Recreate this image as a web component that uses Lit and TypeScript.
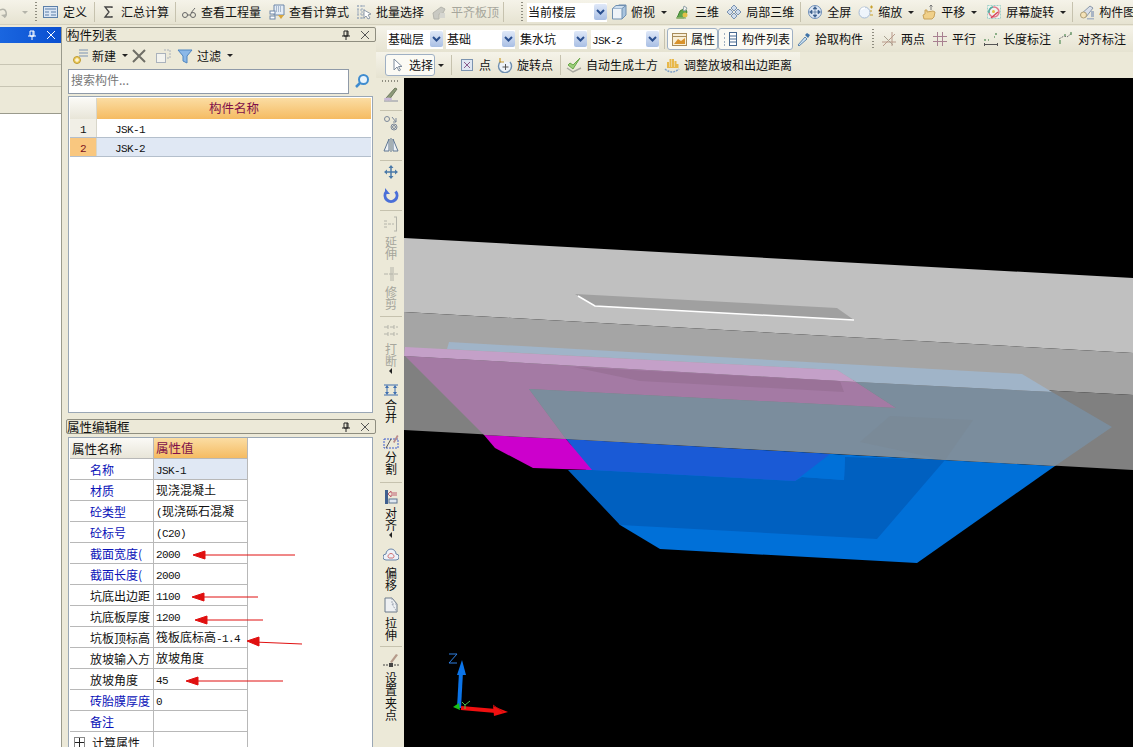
import { LitElement, html, svg, css, nothing } from 'lit';
import { customElement } from 'lit/decorators.js';

// toolbar glyphs, all on a 16x16 box
const ICONS: Record<string, unknown> = {
  redo: svg`<path d="M0 6q5-2 6 2t-2 5" fill="none" stroke="#b4b4aa" stroke-width="1.500"/><path d="M1 11l4 3 2-4z" fill="#b4b4aa"/>`,
  define: svg`<rect x="0.500" y="2.500" width="14" height="11" fill="#dbe6f4" stroke="#5b7fa8"/><path d="M2 5h11M2 8h4M2 11h4M8 8h5M8 11h5" stroke="#5b7fa8"/>`,
  sigma: svg`<path d="M11 4V3H4l4 5-4 5h7v-1" fill="none" stroke="#444" stroke-width="1.3"/>`,
  glasses: svg`<circle cx="4" cy="11" r="2.500" fill="none" stroke="#666"/><circle cx="12" cy="11" r="2.500" fill="none" stroke="#666"/><path d="M6.500 11h3M10 9q3-4 4-5" fill="none" stroke="#666"/>`,
  calc: svg`<path d="M5 1h10v10H5z" fill="#e4ecf6" stroke="#6d86a8"/><path d="M7 3h6M7 5h6M7 7h6" stroke="#6d86a8" stroke-dasharray="1 1"/><rect x="1" y="7" width="5" height="3" fill="#fff" stroke="#6d86a8"/><rect x="1" y="12" width="5" height="3" fill="#fff" stroke="#6d86a8"/><path d="M9 11h6l-3 4z" fill="#d8a63c"/>`,
  batch: svg`<path d="M1 2h9M1 6h9M1 10h9M1 14h9M2 1v14M6 1v14" stroke="#9aa9bb" stroke-dasharray="2 1"/><path d="M8 6l7 4-3 1 2 3-2 1-2-3-2 2z" fill="#fff" stroke="#8d99a8"/>`,
  level: svg`<path d="M2 9l8-6 4 2-2 4-4 1v5H3z" fill="#c9c9c2" stroke="#b4b4ac"/><path d="M9 9h5v5H9z" fill="#d6d6d0"/>`,
  box: svg`<path d="M5 3l3-2h7v10l-4 4z" fill="#a9c4de" stroke="#6f8fb0"/><path d="M1.500 4.500h9.500v10.500H1.500z" fill="#eef3f8" stroke="#6f8fb0"/><path d="M1.500 4.500L5 1.500h10L11 4.500" fill="#cfe0f0" stroke="#6f8fb0"/>`,
  three: svg`<path d="M2 14l3-7 5-3 2 4-3 6z" fill="#5fa64a" stroke="#3f8032"/><path d="M9 2l3 2-2 3-2-1z" fill="#f4f4f0" stroke="#8fa0a8"/><circle cx="10" cy="11" r="2.500" fill="#e3c048"/><path d="M1 14h10" stroke="#9ab878" stroke-width="1.500"/>`,
  local: svg`<path d="M8 1l3 3-3 3-3-3zM4 5l3 3-3 3-3-3zM12 5l3 3-3 3-3-3zM8 9l3 3-3 3-3-3z" fill="#cfdcec" stroke="#7b93b0"/>`,
  full: svg`<circle cx="8" cy="8" r="6.500" fill="#dfe9f6" stroke="#6f8fb8"/><path d="M8 3.500v9M3.500 8h9M8 2.500l-2 2.500h4zM8 13.500l-2-2.500h4zM2.500 8l2.500-2v4zM13.500 8l-2.500-2v4z" fill="#3b5f8f" stroke="#3b5f8f" stroke-width=".6"/>`,
  zoom: svg`<circle cx="6.500" cy="8.500" r="5.500" fill="#eef4fb" stroke="#a8bcd4"/><path d="M3 6a4 4 0 0 1 4-2" fill="none" stroke="#fff" stroke-width="1.500"/><path d="M12 3h3M13.500 1.500v3M12 11h3M12 7h2" stroke="#c8a02c" stroke-width="1.200"/>`,
  pan: svg`<path d="M3 15l-1-4 2-1V6h2v2l6-1 2 1-1 5-2 2z" fill="#f0d089" stroke="#c8a25a"/><path d="M10 6V1M8.500 2.500L10 1l1.500 1.500" fill="none" stroke="#777"/>`,
  rotate: svg`<rect x="1.500" y="1.500" width="13" height="13" fill="#eef4ee" stroke="#9fd0c8" stroke-dasharray="2 1"/><circle cx="8" cy="8" r="5" fill="none" stroke="#e2788a" stroke-width="1.500"/><path d="M3 9a5 5 0 0 1 4-6" fill="none" stroke="#48b6a8" stroke-width="1.500"/><circle cx="7.500" cy="7.500" r="1.500" fill="#e3c048"/><path d="M5 14l7-6" stroke="#d84058" stroke-width="1.500"/>`,
  drawing: svg`<path d="M1 11l10-9 3 2-7 9z" fill="#d8dee8" stroke="#8a98aa"/><circle cx="4.500" cy="11" r="3" fill="#f4e2b8" stroke="#b0a078"/><path d="M8 14h7v1.500H8zM12 7h3v6h-3z" fill="#a8b4c4"/>`,
  attr: svg`<rect x="1.500" y="2.500" width="14" height="12" fill="#f8eed6" stroke="#a88c5a"/><path d="M1.500 5.500h14" stroke="#a88c5a"/><path d="M3 13l4-5 3 2 4-3v6z" fill="#d8922c"/>`,
  list: svg`<path d="M2 3h2M2 7h2M2 11h2M2 14h2" stroke="#46688f" stroke-dasharray="1 1"/><rect x="7.500" y="1.500" width="7" height="13" fill="#fff" stroke="#46688f"/><path d="M7.500 5h7M7.500 8h7M7.500 11h7" stroke="#46688f"/>`,
  picker: svg`<path d="M3 14l7-8 2 2-8 7z" fill="#cfe3f4" stroke="#5e86ad"/><path d="M10 4l2-2 3 2-2 3z" fill="#3f73a8"/>`,
  twopt: svg`<path d="M1 11h14M2 15L14 3M11 1v14" stroke="#b89a8a" fill="none"/><path d="M3 5l9 9" stroke="#a8a090"/>`,
  parallel: svg`<path d="M1 5.500h14M1 10.500h14M5.500 1v14M10.500 1v14" stroke="#a88090" fill="none"/>`,
  dimlen: svg`<path d="M1.500 12v3M14.500 12v3M1.500 13.500h13" stroke="#555" fill="none"/><path d="M2 8v2M13 2v2M5 9h1M11 6h1" stroke="#6a9a6a" stroke-width="1.500"/>`,
  dimal: svg`<path d="M1 8l5-3 3 1 5-4" stroke="#777" stroke-dasharray="2 1" fill="none"/><path d="M2 9v4M7 3v2M13 1v3" stroke="#6a9a6a" stroke-width="1.400"/>`,
  cursor: svg`<path d="M5 2v11l3-3 2 4 1.500-1-2-3.500h3.500z" fill="#fff" stroke="#7d8b9c"/>`,
  point: svg`<rect x="2.500" y="2.500" width="11" height="11" fill="#dfe7f2" stroke="#7b93b0"/><path d="M5 5l6 6M11 5l-6 6" stroke="#8a5a8a"/>`,
  rotpt: svg`<path d="M13 5a6.500 6.500 0 1 1-9.500-.500" fill="#eef3f8" stroke="#6f8fb0" stroke-width="1.400"/><path d="M3 1v4h4" fill="none" stroke="#c89a2c" stroke-width="1.200"/><path d="M8.500 7v6M5.500 10h6" stroke="#555"/>`,
  autogen: svg`<path d="M2 8l5 4 7-11-7 7-3-2z" fill="#9ccf7a" stroke="#6aa84a"/><path d="M1 11l6 4 8-4" fill="none" stroke="#a8a8a0" stroke-width="1.500"/>`,
  hand: svg`<path d="M4 10V5M6.500 10V2M9 10V2M11.500 10V4M13.500 11V7" stroke="#e8b84a" stroke-width="2"/><path d="M3 10h11v1H3z" fill="#e8b84a"/><path d="M1 12q7 6 14 0" fill="none" stroke="#7ea0c8" stroke-width="1.500" stroke-dasharray="2 1"/>`,
  add: svg`<path d="M7 2h9M7 5h9M7 8h9" stroke="#7a93b3"/><circle cx="5" cy="12" r="3.500" fill="#f0cf62" stroke="#bd9a31"/><path d="M5 10v4M3 12h4" stroke="#fff"/>`,
  del: svg`<path d="M2 2l12 12M14 2L2 14" stroke="#6e6e66" stroke-width="2"/>`,
  copy: svg`<rect x="1.500" y="5.500" width="9" height="9" fill="#f3f3ee" stroke="#aab2bc"/><path d="M9 2h6v8h-3" fill="none" stroke="#aab2bc" stroke-dasharray="2 1"/>`,
  filter: svg`<path d="M1 2h14l-5 6v7l-4-2V8z" fill="#8bb8e8" stroke="#4f86c0"/>`,
  search: svg`<circle cx="9.500" cy="6.500" r="4.500" fill="#e9f4fc" stroke="#3f8ccf" stroke-width="2"/><path d="M6 10l-4 4" stroke="#3f8ccf" stroke-width="2.500"/>`,
  brush: svg`<path d="M3 11l9-10 2 1-8 11z" fill="#8d9a78" stroke="#6f7a60"/><path d="M1 14h14" stroke="#8a8fa0"/><ellipse cx="5" cy="12" rx="4" ry="1.500" fill="#c9b8d6"/>`,
  mirror2: svg`<circle cx="4" cy="4" r="2.500" fill="none" stroke="#7b8798"/><circle cx="11" cy="12" r="3" fill="none" stroke="#7b8798"/><circle cx="11" cy="12" r="1.500" fill="none" stroke="#7b8798"/><path d="M9 2l4 5M13 3v4h-3" fill="none" stroke="#7b8798"/>`,
  mirror: svg`<path d="M6 2L1 14h5zM10 2l5 12h-5z" fill="#eef2f6" stroke="#5f7691"/><path d="M8 1v14" stroke="#5f7691"/>`,
  move: svg`<path d="M8 1l2.500 3h-5zM8 15l2.500-3h-5zM1 8l3-2.500v5zM15 8l-3-2.500v5z" fill="#4a79a8"/><path d="M8 4v8M4 8h8" stroke="#4a79a8" stroke-width="1.500"/>`,
  spin: svg`<path d="M12.500 4.500a6 6 0 1 1-9 0" fill="none" stroke="#4a6fd8" stroke-width="3"/><path d="M2 1v6h5z" fill="#4a6fd8"/>`,
  extend: svg`<path d="M13.500 1v14M11 1h3M11 15h3" stroke="#b4b4aa" fill="none"/><path d="M1 8h10M1 5h3M1 11h3" stroke="#b4b4aa" stroke-dasharray="3 1"/>`,
  trim: svg`<path d="M8 1v14M10 1v14" stroke="#b4b4aa"/><path d="M1 8h14" stroke="#b4b4aa" stroke-dasharray="4 1"/>`,
  split0: svg`<path d="M1 5h14M1 12h14" stroke="#b4b4aa" stroke-dasharray="4 2"/><path d="M5 3v4M11 3v4M5 10v4M11 10v4" stroke="#b4b4aa"/>`,
  merge: svg`<path d="M1 3h14M1 13h14" stroke="#3f6fb0"/><path d="M4 3l2 3h-4zM12 3l2 3h-4zM4 13l2-3h-4zM12 13l2-3h-4z" fill="#3f6fb0"/><path d="M4 6v4M12 6v4" stroke="#3f6fb0"/>`,
  split: svg`<path d="M1 5h14v9H1z" fill="none" stroke="#3f5fd0" stroke-dasharray="2 1"/><path d="M3 14l5-9" stroke="#555"/><path d="M10 8l4-7 1.500 1-4 7z" fill="#b98a8a"/>`,
  align: svg`<path d="M2 1h3v14H2z" fill="#3f5f8f"/><path d="M5 5l3-3v2h6M5 5l3 3V6h6" fill="none" stroke="#c06070"/><rect x="6" y="10" width="8" height="4" fill="#dfe7f0" stroke="#5f7691"/>`,
  offset: svg`<path d="M3 13a3 3 0 0 1 0-6 5 5 0 0 1 10 0 3 3 0 0 1 0 6z" fill="#eef2f8" stroke="#6a85a8"/><path d="M6 11a2 2 0 0 1 0-3.500 2.500 2.500 0 0 1 4 0 2 2 0 0 1 0 3.500z" fill="none" stroke="#d07070"/>`,
  stretch: svg`<path d="M2 1h7l5 6v8H2z" fill="#eef0f2" stroke="#6d7a8a"/><path d="M9 1v6h5M9 7l5 8" fill="none" stroke="#a0a8b4" stroke-dasharray="2 1"/>`,
  grip: svg`<path d="M0 12h5M11 12h5" stroke="#444" stroke-dasharray="2 1"/><rect x="6" y="10" width="4" height="4" fill="#444"/><path d="M7 9l6-8 2 1-6 8z" fill="#b59a8a"/>`,
};

type Tool = { i?: string; t?: string; caret?: boolean; off?: boolean; on?: boolean; w?: number; gap?: number };
type Combo = { combo: string; w: number; gap?: number };
type Bar = { sep: true; gap?: number } | { grip: true; gap?: number };
type Entry = Tool | Combo | Bar;

const TOP: Entry[] = [
  { i: 'redo', caret: true, off: true, w: 35 },
  { grip: true, gap: 6 },
  { i: 'define', t: '定义', gap: 7 },
  { sep: true, gap: 6 },
  { i: 'sigma', t: '汇总计算', gap: 6 },
  { sep: true, gap: 5 },
  { i: 'glasses', t: '查看工程量', gap: 8 },
  { i: 'calc', t: '查看计算式', gap: 7 },
  { i: 'batch', t: '批量选择', gap: 7 },
  { i: 'level', t: '平齐板顶', off: true, gap: 4 },
  { sep: true, gap: 17 },
  { grip: true, gap: 4 },
  { combo: '当前楼层', w: 80, gap: 4 },
  { i: 'box', t: '俯视', caret: true, gap: 8 },
  { i: 'three', t: '三维', gap: 7 },
  { i: 'local', t: '局部三维', gap: 6 },
  { sep: true, gap: 6 },
  { i: 'full', t: '全屏', gap: 7 },
  { i: 'zoom', t: '缩放', caret: true, gap: 7 },
  { i: 'pan', t: '平移', caret: true, gap: 9 },
  { i: 'rotate', t: '屏幕旋转', caret: true, gap: 6 },
  { sep: true, gap: 6 },
  { i: 'drawing', t: '构件图', gap: 0 },
];

const ROW2: Entry[] = [
  { combo: '基础层', w: 56, gap: 3 },
  { combo: '基础', w: 69, gap: 4 },
  { combo: '集水坑', w: 68, gap: 4 },
  { combo: 'JSK-2', w: 68, gap: 5 },
  { sep: true, gap: 2 },
  { i: 'attr', t: '属性', on: true, gap: 0 },
  { i: 'list', t: '构件列表', on: true, gap: 2 },
  { i: 'picker', t: '拾取构件', gap: 9 },
  { grip: true, gap: 7 },
  { i: 'twopt', t: '两点', gap: 7 },
  { i: 'parallel', t: '平行', gap: 7 },
  { i: 'dimlen', t: '长度标注', gap: 7 },
  { i: 'dimal', t: '对齐标注', gap: 0 },
];

const ROW3: Entry[] = [
  { i: 'cursor', t: '选择', on: true, w: 50, caret: true, gap: 7 },
  { sep: true, gap: 7 },
  { i: 'point', t: '点', gap: 6 },
  { i: 'rotpt', t: '旋转点', gap: 7 },
  { sep: true, gap: 5 },
  { i: 'autogen', t: '自动生成土方', gap: 6 },
  { i: 'hand', t: '调整放坡和出边距离', gap: 0 },
];

// side toolbar: m = space above the icon, tm = space above the label
type Side = { sep?: boolean; i?: string; t?: string; m: number; tm?: number; off?: boolean; caret?: boolean };
const SIDE: Side[] = [
  { i: 'brush', m: 5 },
  { sep: true, m: 7 },
  { i: 'mirror2', m: 4 },
  { i: 'mirror', m: 6 },
  { sep: true, m: 7 },
  { i: 'move', m: 3 },
  { i: 'spin', m: 7 },
  { sep: true, m: 7 },
  { i: 'extend', t: '延伸', m: 5, tm: 4, off: true },
  { i: 'trim', t: '修剪', m: 5, tm: 4, off: true },
  { sep: true, m: 5 },
  { i: 'split0', t: '打断', m: 5, tm: 5, off: true, caret: true },
  { i: 'merge', t: '合并', m: 8, tm: 1 },
  { i: 'split', t: '分割', m: 10, tm: 1 },
  { sep: true, m: 6 },
  { i: 'align', t: '对齐', m: 6, tm: 2, caret: true },
  { i: 'offset', t: '偏移', m: 9, tm: 4 },
  { i: 'stretch', t: '拉伸', m: 5, tm: 4 },
  { sep: true, m: 4 },
  { i: 'grip', t: '设置夹点', m: 6, tm: 3 },
];

const PROPS: { n: string; v: string; blue?: boolean; sel?: boolean; plus?: boolean }[] = [
  { n: '名称', v: 'JSK-1', blue: true, sel: true },
  { n: '材质', v: '现浇混凝土', blue: true },
  { n: '砼类型', v: '(现浇砾石混凝', blue: true },
  { n: '砼标号', v: '(C20)', blue: true },
  { n: '截面宽度(', v: '2000', blue: true },
  { n: '截面长度(', v: '2000', blue: true },
  { n: '坑底出边距', v: '1100' },
  { n: '坑底板厚度', v: '1200' },
  { n: '坑板顶标高', v: '筏板底标高-1.4' },
  { n: '放坡输入方', v: '放坡角度' },
  { n: '放坡角度', v: '45' },
  { n: '砖胎膜厚度', v: '0', blue: true },
  { n: '备注', v: '', blue: true },
  { n: '计算属性', v: '', plus: true },
];

// SimSun's latin glyphs are half width, so latin runs get their own font
const mixed = (s: string) =>
  s.split(/([\x20-\x7e]+)/).map((p) => (/^[\x20-\x7e]+$/.test(p) ? html`<span class="lat">${p}</span>` : p));

const glyph = (name: string) => html`<svg class="ic" viewBox="0 0 16 16">${ICONS[name]}</svg>`;

const panelHead = (title: string) => html`
  <div class="head">
    <span class="head-t">${title}</span>
    <svg class="pin" viewBox="0 0 10 10"><path d="M3 1h4v5H3zM1 6h8M5 6v4M6 1v5" fill="none" stroke="#222"/></svg>
    <svg class="pin" viewBox="0 0 10 10"><path d="M1 1l8 8M9 1L1 9" stroke="#555"/></svg>
  </div>`;

@customElement('app-root')
export class AppRoot extends LitElement {
  static styles = css`
    :host {
      display: block;
      position: relative;
      width: 1133px;
      height: 747px;
      overflow: hidden;
      background: #ece9d8;
      font: 12px/14px 'Noto Sans CJK SC', 'Liberation Sans', sans-serif;
      color: #111;
    }
    .lat { font: 11px 'Liberation Mono', monospace; letter-spacing: -0.6px; }
    .ic { width: 16px; height: 16px; flex: none; display: block; }

    .bar {
      display: flex;
      align-items: center;
      white-space: nowrap;
      overflow: hidden;
      flex: none;
      background: linear-gradient(#f5f3e9, #e6e3d1);
    }
    .top { height: 25px; margin-bottom: 2px; border-bottom: 1px solid #d4d0bd; box-sizing: border-box; }
    .tool { display: flex; align-items: center; gap: 4px; flex: none; box-sizing: border-box; height: 22px; }
    .tool.off { color: #a6a69c; }
    .tool.on {
      background: #fbfaf4;
      border: 1px solid #9fb0c4;
      border-radius: 3px;
      padding: 0 2px 0 3px;
    }
    .caret { width: 0; height: 0; border: 3px solid transparent; border-top: 3px solid #222; border-bottom: 0; margin-left: 2px; flex: none; }
    .tool.off .caret { border-top-color: #b4b4aa; }
    .tool.on + .caret { margin-left: 3px; }
    .sep { width: 1px; height: 20px; background: #c6c2ae; flex: none; }
    .gripv { width: 2px; height: 20px; flex: none; background: repeating-linear-gradient(#8f8d80 0 1px, transparent 1px 3px); }
    .combo {
      display: flex;
      align-items: center;
      justify-content: space-between;
      background: #fff;
      height: 19px;
      padding-left: 1px;
      flex: none;
      box-sizing: border-box;
    }
    .arrow {
      width: 13px;
      height: 16px;
      border-radius: 2px;
      background: linear-gradient(#dfe8f8, #a9bfe4);
      display: flex;
      align-items: center;
      justify-content: center;
    }
    .arrow svg { width: 9px; height: 6px; }

    .main { display: flex; height: 720px; }
    .left { width: 62px; flex: none; display: flex; flex-direction: column; border-right: 1px solid #9a9a8c; box-sizing: border-box; }
    .left-title {
      height: 16px;
      flex: none;
      background: linear-gradient(90deg, #1a66e0, #0a4fd0);
      display: flex;
      align-items: center;
      justify-content: flex-end;
      gap: 9px;
      padding-right: 5px;
    }
    .left-row { height: 22px; flex: none; border-bottom: 1px solid #c8c5b4; box-sizing: border-box; background: #ece9d8; }
    .left-row.tall { height: 27px; border-bottom: 1px solid #9a9a8c; }
    .left-body { flex: 1; background: #fff; }

    .mid { width: 310px; margin-left: 4px; flex: none; display: flex; flex-direction: column; }
    .head {
      height: 15px;
      flex: none;
      display: flex;
      align-items: center;
      gap: 9px;
      padding-right: 5px;
      border: 1px solid #8f8e80;
      border-radius: 2px;
      box-sizing: border-box;
      background: #ece9d8;
      font-size: 12.5px;
    }
    .head-t { flex: 1; }
    .pin { width: 10px; height: 10px; flex: none; }

    .list-bar { height: 27px; flex: none; display: flex; align-items: center; padding-left: 6px; box-sizing: border-box; }
    .search { display: flex; height: 25px; flex: none; gap: 5px; padding-left: 2px; }
    .search-in {
      width: 281px;
      border: 1px solid #8f9aa8;
      background: #fff;
      color: #777;
      box-sizing: border-box;
      padding: 3px 2px;
    }
    .search .ic { margin-top: 4px; }

    .grid-a {
      height: 317px;
      margin: 2px 0 0 2px;
      width: 305px;
      flex: none;
      background: #fff;
      border: 1px solid #9aa7b5;
      box-sizing: border-box;
      padding: 1px;
    }
    .g-row { display: flex; height: 19px; border-bottom: 1px solid #b4bfcc; box-sizing: border-box; line-height: 18px; }
    .g-row.hd { height: 21px; line-height: 20px; border: 0; }
    .g-no { width: 27px; flex: none; text-align: center; background: #f1efe6; border-right: 1px solid #d8d6ca; box-sizing: border-box; }
    .g-no.sel { background: #f9c77f; color: #7a1020; }
    .g-name { flex: 1; padding-left: 18px; }
    .g-row.sel .g-name { background: #e0e8f4; }
    .g-name.hd { padding: 0; text-align: center; color: #80104a; background: linear-gradient(#fbdda3, #f5bb62); font-size: 12.5px; }
    .g-no.hd { background: linear-gradient(#fbfaf6, #e8e5d8); }

    .attr-head { margin-top: 6px; }
    .attr-body {
      flex: 1;
      margin: 3px 0 0 2px;
      width: 305px;
      background: #fff;
      border: 1px solid #9aa7b5;
      border-bottom: 0;
      box-sizing: border-box;
      padding-left: 1px;
      overflow: hidden;
    }
    .p-row { display: grid; grid-template-columns: 84px 94px; height: 21px; width: 178px; }
    .p-row > div { border-right: 1px solid #b8b8b8; border-bottom: 1px solid #b8b8b8; box-sizing: border-box; line-height: 19px; overflow: hidden; white-space: nowrap; }
    .p-name { padding-left: 20px; font-size: 12px; display: flex; align-items: center; }
    .p-name.blue { color: #0a12b8; }
    .p-val { padding-left: 2px; }
    .p-val.sel { background: #e0e8f4; }
    .p-name.hd { padding-left: 2px; background: linear-gradient(#fbfaf6, #e8e5d8); font-size: 12.5px; }
    .p-val.hd { color: #80104a; background: linear-gradient(#fbdda3, #f5bb62); font-size: 12.5px; }
    .plus {
      position: relative;
      left: -16px;
      margin-right: -9px;
      width: 9px;
      height: 9px;
      border: 1px solid #888;
      background: linear-gradient(90deg, transparent 4px, #222 4px 5px, transparent 5px), linear-gradient(transparent 4px, #222 4px 5px, transparent 5px), #fff;
      flex: none;
    }

    .right { flex: 1; display: flex; flex-direction: column; min-width: 0; margin-top: -1px; }
    .row2 { height: 26px; padding-left: 11px; }
    .row3 { height: 26px; padding-left: 9px; width: 424px; box-sizing: border-box; }
    .work { flex: 1; display: flex; min-height: 0; }
    .side {
      width: 26px;
      margin-left: 2px;
      padding-right: 1px;
      box-sizing: border-box;
      flex: none;
      display: flex;
      flex-direction: column;
      align-items: center;
      overflow: hidden;
      background: #ece9d8;
    }
    .side .dots { width: 18px; height: 2px; margin-top: 2px; flex: none; background: repeating-linear-gradient(90deg, #8f8d80 0 1px, transparent 1px 3px); }
    .side .hr { width: 22px; height: 1px; background: #c6c2ae; flex: none; }
    .side .lab { writing-mode: vertical-rl; letter-spacing: 0.5px; line-height: 12px; flex: none; }
    .side .off { color: #a6a69c; }
    .tri { flex: none; width: 0; height: 0; border: 3px solid transparent; border-right: 3px solid #222; border-left: 0; }
    .canvas { flex: 1; display: block; background: #000; min-width: 0; }

    .marks { position: absolute; left: 0; top: 0; width: 1133px; height: 747px; pointer-events: none; }
  `;

  private renderEntry(e: Entry) {
    const gap = e.gap ?? 0;
    const style = `margin-right:${gap}px`;
    if ('sep' in e) return html`<div class="sep" style=${style}></div>`;
    if ('grip' in e) return html`<div class="gripv" style=${style}></div>`;
    if ('combo' in e) {
      return html`<div class="combo" style="width:${e.w}px;${style}">
        <span>${mixed(e.combo)}</span>
        <span class="arrow"><svg viewBox="0 0 9 6"><path d="M1 1l3.500 3.500L8 1" fill="none" stroke="#2a4f8f" stroke-width="2"/></svg></span>
      </div>`;
    }
    const boxed = e.on ? 'on' : '';
    const width = e.w ? `width:${e.w}px;` : '';
    const body = html`<div class="tool ${e.off ? 'off' : ''} ${boxed}" style="${width}${e.on && e.caret ? '' : style}">
      ${e.i ? glyph(e.i) : nothing}${e.t ? html`<span>${e.t}</span>` : nothing}
      ${e.caret && !e.on ? html`<span class="caret"></span>` : nothing}
    </div>`;
    if (e.on && e.caret) return html`${body}<span class="caret" style=${style}></span>`;
    return body;
  }

  private renderSide(s: Side) {
    if (s.sep) return html`<div class="hr" style="margin-top:${s.m}px"></div>`;
    return html`
      <div class=${s.off ? 'off' : ''} style="margin-top:${s.m}px;flex:none">${glyph(s.i!)}</div>
      ${s.t ? html`<div class="lab ${s.off ? 'off' : ''}" style="margin-top:${s.tm}px">${s.t}</div>` : nothing}
      ${s.caret ? html`<div class="tri"></div>` : nothing}
    `;
  }

  private renderScene() {
    return svg`
      <polygon points="568,440 1055,466 917,563 660,549 620,525" fill="#0070d8"/>
      <polygon points="592,470 795,481 802,477 844,480 845,457 945,460 877,539 620,525 568,470" fill="#0060c0"/>
      <polygon points="802,477 830,454 845,457 844,480" fill="#0070d8"/>
      <polygon points="566,439 830,454 795,481 592,470" fill="#1a5ad6"/>
      <polygon points="484,435 566,439 592,470 533,468 495,448" fill="#cc00cc"/>
      <polygon points="404,238 1133,278 1133,353 404,312" fill="#c0c0c0"/>
      <polygon points="404,312 1133,353 1133,395 404,356" fill="#a5a5a5"/>
      <polygon points="404,356 1133,395 1133,470 404,430" fill="#808080"/>
      <polygon points="449,342 1022,374 1052,392 856,382 837,370 447,349" fill="#a0b4c8"/>
      <polygon points="405,347 837,370 856,382 404,356" fill="#c4a0c8"/>
      <polygon points="405,356 856,382 896,408 529,389 566,439 484,435" fill="#a47aa4"/>
      <polygon points="573,367 840,381 844,392 640,381" fill="#9a7298"/>
      <polygon points="856,382 1052,392 1112,427 1055,466 566,439 529,389 896,408" fill="#7b8d9d"/>
      <polygon points="860,442 890,416 973,420 945,460" fill="#7a8a98"/>
      <polygon points="575,294 837,308 854,320 595,306" fill="#a0a0a0"/>
      <polyline points="578,296 595,306 854,320" fill="none" stroke="#fff" stroke-width="1.500"/>
      <path d="M459 708L461 672" stroke="#0b74e8" stroke-width="4" fill="none"/>
      <polygon points="462,660 457,675 466,675" fill="#0b74e8"/>
      <path d="M461 708L496 711" stroke="#f01010" stroke-width="4" fill="none"/>
      <polygon points="508,712 493,706 494,716" fill="#f01010"/>
      <path d="M493 705l10 7" stroke="#c01010" fill="none"/>
      <polygon points="453,707 459,703 460,710" fill="#18c018"/>
      <path d="M449 654h8l-8 9h8" stroke="#2f7fe0" fill="none"/>
      <path d="M462 702l3 3 5-4M465 705v4" stroke="#4cc04c" fill="none"/>
    `;
  }

  render() {
    return html`
      <div class="bar top">${TOP.map((e) => this.renderEntry(e))}</div>
      <div class="main">
        <div class="left">
          <div class="left-title">
            <svg class="pin" viewBox="0 0 10 10"><path d="M3 1h4v5H3zM1 6h8M5 6v4M6 1v5" fill="none" stroke="#fff"/></svg>
            <svg class="pin" viewBox="0 0 10 10"><path d="M1 1l8 8M9 1L1 9" stroke="#fff"/></svg>
          </div>
          <div class="left-row"></div>
          <div class="left-row"></div>
          <div class="left-row tall"></div>
          <div class="left-body"></div>
        </div>
        <div class="mid">
          ${panelHead('构件列表')}
          <div class="list-bar">
            ${this.renderEntry({ i: 'add', t: '新建', caret: true, gap: 3 })}
            ${this.renderEntry({ i: 'del', gap: 8 })}
            ${this.renderEntry({ i: 'copy', gap: 6 })}
            ${this.renderEntry({ i: 'filter', t: '过滤', caret: true })}
          </div>
          <div class="search">
            <div class="search-in">搜索构件...</div>
            ${glyph('search')}
          </div>
          <div class="grid-a">
            <div class="g-row hd"><div class="g-no hd"></div><div class="g-name hd">构件名称</div></div>
            <div class="g-row"><div class="g-no">${mixed('1')}</div><div class="g-name">${mixed('JSK-1')}</div></div>
            <div class="g-row sel"><div class="g-no sel">${mixed('2')}</div><div class="g-name">${mixed('JSK-2')}</div></div>
          </div>
          <div class="attr-head">${panelHead('属性编辑框')}</div>
          <div class="attr-body">
            <div class="p-row"><div class="p-name hd">属性名称</div><div class="p-val hd">属性值</div></div>
            ${PROPS.map(
              (p) => html`<div class="p-row">
                <div class="p-name ${p.blue ? 'blue' : ''}">${p.plus ? html`<span class="plus"></span>` : nothing}${p.n}</div>
                <div class="p-val ${p.sel ? 'sel' : ''}">${mixed(p.v)}</div>
              </div>`,
            )}
          </div>
        </div>
        <div class="right">
          <div class="bar row2">${ROW2.map((e) => this.renderEntry(e))}</div>
          <div class="bar row3">${ROW3.map((e) => this.renderEntry(e))}</div>
          <div class="work">
            <div class="side">
              <div class="dots"></div>
              ${SIDE.map((s) => this.renderSide(s))}
            </div>
            <svg class="canvas" viewBox="404 78 729 670" preserveAspectRatio="xMinYMin slice">${this.renderScene()}</svg>
          </div>
        </div>
      </div>
      <svg class="marks" viewBox="0 0 1133 747">
        <g stroke="#e01010" stroke-width="1" fill="#e01010">
          <path d="M295 555H200"/><polygon points="193,555 205,551 205,559"/>
          <path d="M258 597H199"/><polygon points="192,597 204,593 204,601"/>
          <path d="M263 620H202"/><polygon points="195,620 207,616 207,624"/>
          <path d="M302 644L254 642"/><polygon points="247,641 259,637 259,646"/>
          <path d="M283 681H193"/><polygon points="186,681 198,677 198,685"/>
        </g>
      </svg>
    `;
  }
}
